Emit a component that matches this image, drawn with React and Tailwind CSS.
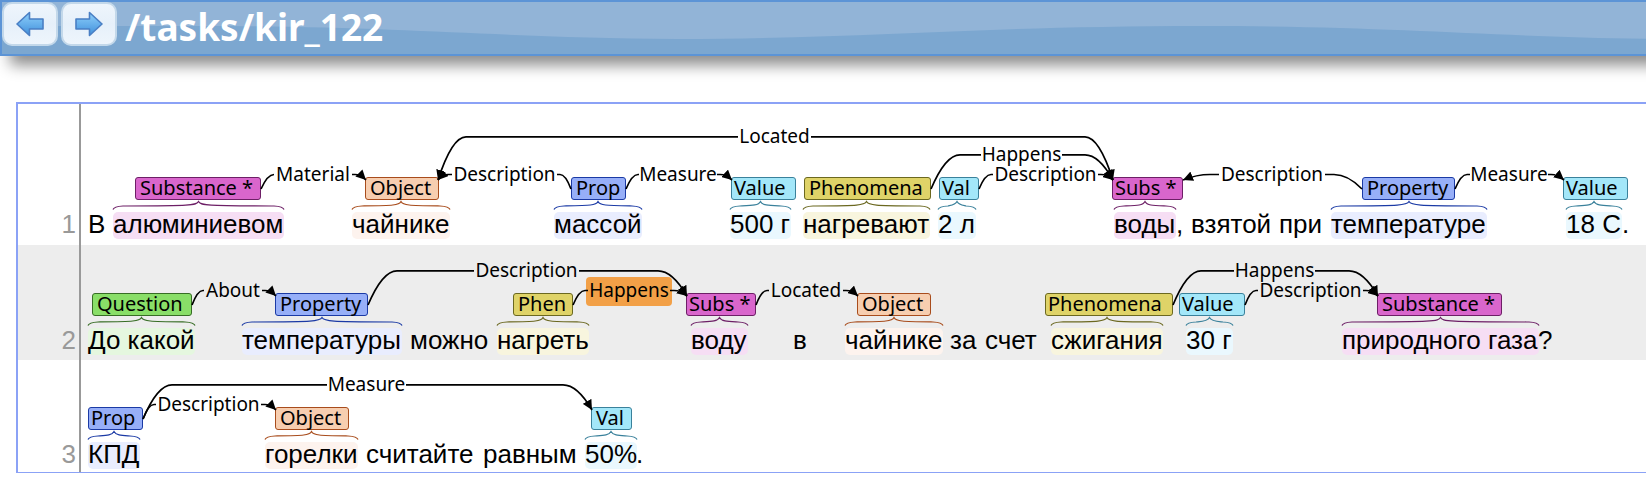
import React from "react";

/* Horizontal positions count from the page edge; the sentence canvas begins here. */
const CANVAS_LEFT = 81;
const ARC_LEVELS = [-2.5, -22.2, -40.2];

const CHIP = {
  purple: "bg-[#d966cc] border-[#6d1f66]",
  orange: "bg-[#f7ceb0] border-[#a84c1c]",
  blue: "bg-[#97aff8] border-[#1b3aa5]",
  cyan: "bg-[#a3e7f9] border-[#3a819b]",
  olive: "bg-[#dfd368] border-[#6b6820]",
  green: "bg-[#89de68] border-[#376d25]",
};
const GLOW = {
  purple: "bg-[#f6def4]",
  orange: "bg-[#fdf3ee]",
  blue: "bg-[#e9edfe]",
  cyan: "bg-[#eaf8fe]",
  olive: "bg-[#f8f5de]",
  green: "bg-[#e5f7df]",
};
const BRACE = {
  purple: "stroke-[#6d1f66]",
  orange: "stroke-[#a84c1c]",
  blue: "stroke-[#1b3aa5]",
  cyan: "stroke-[#3a819b]",
  olive: "stroke-[#6b6820]",
  green: "stroke-[#376d25]",
};

const SENTENCES = [
  {
    height: "h-[141px]",
    chipTop: 73,
    plain: [
      [88, "В"],
      [1176, ","],
      [1191, "взятой"],
      [1279, "при"],
      [1622, "."],
    ],
    spans: [
      { text: "алюминиевом", x: 113, end: 284, label: "Substance *", chip: [135, 261], color: "purple" },
      { text: "чайнике", x: 352, end: 450, label: "Object", chip: [365, 439], color: "orange" },
      { text: "массой", x: 554, end: 642, label: "Prop", chip: [571, 626], color: "blue" },
      { text: "500 г", x: 730, end: 791, label: "Value", chip: [731, 796], color: "cyan", tight: true },
      { text: "нагревают", x: 803, end: 930, label: "Phenomena", chip: [804, 931], color: "olive" },
      { text: "2 л", x: 938, end: 976, label: "Val", chip: [939, 979], color: "cyan", tight: true },
      { text: "воды", x: 1114, end: 1176, label: "Subs *", chip: [1112, 1183], color: "purple", tight: true },
      { text: "температуре", x: 1331, end: 1487, label: "Property", chip: [1362, 1455], color: "blue" },
      { text: "18 С", x: 1566, end: 1622, label: "Value", chip: [1563, 1628], color: "cyan", tight: true },
    ],
    arcs: [
      { label: "Material", level: 0, from: 261, fromFlat: 274, text: [276, 350], toFlat: 355, to: 366 },
      { label: "Description", level: 0, from: 571, fromFlat: 560, text: [454, 555], toFlat: 448, to: 438 },
      { label: "Measure", level: 0, from: 626, fromFlat: 638, text: [641, 715], toFlat: 720, to: 732 },
      { label: "Located", level: 2, from: 1113, fromFlat: 1085, text: [740, 809], toFlat: 466, to: 438, both: true },
      { label: "Happens", level: 1, from: 931, fromFlat: 960, text: [983, 1060], toFlat: 1085, to: 1113 },
      { label: "Description", level: 0, from: 979, fromFlat: 991, text: [995, 1096], toFlat: 1101, to: 1113 },
      { label: "Description", level: 0, from: 1362, fromFlat: 1334, text: [1221, 1323], toFlat: 1210, to: 1183 },
      { label: "Measure", level: 0, from: 1455, fromFlat: 1467, text: [1472, 1546], toFlat: 1551, to: 1564 },
    ],
  },
  {
    height: "h-[115px]",
    chipTop: 48,
    shaded: true,
    plain: [
      [410, "можно"],
      [793, "в"],
      [950, "за"],
      [985, "счет"],
      [1538, "?"],
    ],
    spans: [
      { text: "До какой", x: 88, end: 195, label: "Question", chip: [92, 192], color: "green" },
      { text: "температуры", x: 242, end: 402, label: "Property", chip: [275, 368], color: "blue" },
      { text: "нагреть", x: 497, end: 589, label: "Phen", chip: [513, 573], color: "olive" },
      { text: "воду", x: 691, end: 748, label: "Subs *", chip: [686, 756], color: "purple", tight: true },
      { text: "чайнике", x: 845, end: 943, label: "Object", chip: [857, 931], color: "orange" },
      { text: "сжигания", x: 1051, end: 1163, label: "Phenomena", chip: [1045, 1173], color: "olive", tight: true },
      { text: "30 г", x: 1186, end: 1233, label: "Value", chip: [1179, 1245], color: "cyan", tight: true },
      { text: "природного газа", x: 1342, end: 1539, label: "Substance *", chip: [1377, 1502], color: "purple" },
    ],
    arcs: [
      { label: "About", level: 0, from: 192, fromFlat: 203, text: [206, 260], toFlat: 265, to: 276 },
      { label: "Description", level: 1, from: 368, fromFlat: 397, text: [476, 577], toFlat: 658, to: 687 },
      { label: "Happens", level: 0, from: 573, fromFlat: 585, text: [590, 668], toFlat: 674, to: 687, active: true },
      { label: "Located", level: 0, from: 756, fromFlat: 767, text: [771, 841], toFlat: 846, to: 858 },
      { label: "Happens", level: 1, from: 1173, fromFlat: 1201, text: [1236, 1313], toFlat: 1349, to: 1378 },
      { label: "Description", level: 0, from: 1245, fromFlat: 1256, text: [1260, 1361], toFlat: 1366, to: 1378 },
    ],
  },
  {
    height: "h-[112px]",
    chipTop: 47,
    plain: [
      [366, "считайте"],
      [483, "равным"],
      [636, "."],
    ],
    spans: [
      { text: "КПД", x: 88, end: 140, label: "Prop", chip: [88, 143], color: "blue", tight: true },
      { text: "горелки", x: 265, end: 358, label: "Object", chip: [275, 349], color: "orange" },
      { text: "50%", x: 585, end: 637, label: "Val", chip: [591, 632], color: "cyan" },
    ],
    arcs: [
      { label: "Description", level: 0, from: 143, fromFlat: 154, text: [158, 259], toFlat: 265, to: 276 },
      { label: "Measure", level: 1, from: 143, fromFlat: 172, text: [329, 404], toFlat: 563, to: 592 },
    ],
  },
];

function bracePath(x0, x1, top) {
  const mid = (x0 + x1) / 2;
  return `M${x0} ${top + 8} Q${x0 + 1} ${top + 5} ${x0 + 10} ${top + 4.5} C${mid - 8} ${top + 4} ${mid - 2} ${top + 4} ${mid} ${top} C${mid + 2} ${top + 4} ${mid + 8} ${top + 4} ${x1 - 10} ${top + 4.5} Q${x1 - 1} ${top + 5} ${x1} ${top + 8}`;
}

function Arc({ arc, chipTop }) {
  const y = chipTop + ARC_LEVELS[arc.level];
  const dir = arc.to > arc.from ? 1 : -1;
  const [t0, t1] = arc.text;
  const start = dir > 0 ? t0 - 2 : t1 + 2;
  const end = dir > 0 ? t1 + 2 : t0 - 2;
  const bendFrom = (arc.from + arc.fromFlat) / 2;
  const bendTo = (arc.to + arc.toFlat) / 2;
  return (
    <g className="fill-none stroke-black" strokeWidth="1.7">
      {arc.both ? (
        <path
          d={`M${start} ${y} H${arc.fromFlat} Q${bendFrom} ${y} ${arc.from} ${chipTop + 3}`}
          markerEnd="url(#arrow)"
        />
      ) : (
        <path d={`M${start} ${y} H${arc.fromFlat} Q${bendFrom} ${y} ${arc.from} ${chipTop + 12}`} />
      )}
      <path d={`M${end} ${y} H${arc.toFlat} Q${bendTo} ${y} ${arc.to} ${chipTop + 3}`} markerEnd="url(#arrow)" />
    </g>
  );
}

function Sentence({ number, sentence }) {
  const { chipTop, spans, plain, arcs } = sentence;
  const left = (x) => x - CANVAS_LEFT;
  return (
    <li className={`flex ${sentence.height} ${sentence.shaded ? "bg-[#ededed]" : "bg-white"}`}>
      <div
        className="w-[63px] shrink-0 border-r-2 border-[#999999] pr-[3px] text-right text-[26px] leading-[25px] text-[#999999]"
        style={{ paddingTop: chipTop + 35 }}
      >
        {number}
      </div>
      <div className="relative flex-1">
        {spans.map((s) => (
          <React.Fragment key={s.x}>
            <mark
              className={`absolute h-[27px] rounded-[5px] text-[26px] leading-[25px] whitespace-nowrap text-black ${GLOW[s.color]}`}
              style={{ left: left(s.x), top: chipTop + 35, width: s.end - s.x }}
            >
              {s.text}
            </mark>
            <div
              className={`absolute h-[23px] rounded-[3px] border font-['Noto_Sans',sans-serif] text-[20px] leading-[19px] whitespace-nowrap ${s.tight ? "pl-[2px]" : "pl-1"} ${CHIP[s.color]}`}
              style={{ left: left(s.chip[0]), top: chipTop, width: s.chip[1] - s.chip[0] }}
            >
              {s.label}
            </div>
          </React.Fragment>
        ))}
        {plain.map(([x, text]) => (
          <span
            key={x}
            className="absolute text-[26px] leading-[25px] whitespace-nowrap"
            style={{ left: left(x), top: chipTop + 35 }}
          >
            {text}
          </span>
        ))}
        {arcs.map((a) => (
          <span
            key={a.text[0]}
            className={`absolute flex justify-center font-['Noto_Sans',sans-serif] text-[19px] leading-[19px] whitespace-nowrap ${a.active ? "-mt-1 h-[29px] rounded-[4px] bg-[#f2a047] pt-1" : "h-[19px]"}`}
            style={{
              left: left(a.text[0] - 4),
              top: Math.round(chipTop + ARC_LEVELS[a.level] - 10),
              width: a.text[1] - a.text[0] + 8,
            }}
          >
            {a.label}
          </span>
        ))}
        <svg className="absolute inset-0 size-full overflow-visible" aria-hidden="true">
          <g transform={`translate(${-CANVAS_LEFT} 0)`}>
            {spans.map((s) => (
              <path
                key={s.x}
                d={bracePath(s.x, s.end, chipTop + 24.5)}
                className={`fill-none ${BRACE[s.color]}`}
                strokeWidth="1.2"
              />
            ))}
            {arcs.map((a) => (
              <Arc key={a.text[0]} arc={a} chipTop={chipTop} />
            ))}
          </g>
        </svg>
      </div>
    </li>
  );
}

function NavButton({ label, flip }) {
  return (
    <button
      type="button"
      aria-label={label}
      className="flex h-[44px] w-[56px] items-center justify-center rounded-[10px] border-2 border-[#c3d8ea] bg-linear-to-b from-[#eef5fc] via-[#e6f0fa] to-[#eef5fc]"
    >
      <svg viewBox="0 0 28 26" className={`h-[26px] w-[28px] ${flip ? "-scale-x-100" : ""}`}>
        <path
          d="M1 13 13.500 1.500V8H27v10H13.500v6.500Z"
          fill="url(#nav-fill)"
          stroke="#4a7fc4"
          strokeWidth="1.6"
          strokeLinejoin="round"
        />
      </svg>
    </button>
  );
}

export default function App() {
  return (
    <div className="overflow-x-hidden bg-white font-['Liberation_Sans',Arial,sans-serif] text-black">
      <svg className="absolute size-0" aria-hidden="true">
        <defs>
          <marker id="arrow" viewBox="0 0 10 10" refX="10" refY="5" markerWidth="10" markerHeight="10" markerUnits="userSpaceOnUse" orient="auto">
            <path d="M0 0 10 5 0 10Z" />
          </marker>
          <linearGradient id="nav-fill" x1="0" y1="0" x2="0" y2="1">
            <stop offset="0" stopColor="#8fd0fb" />
            <stop offset="1" stopColor="#3f8fdb" />
          </linearGradient>
        </defs>
      </svg>
      <header className="relative -mr-8 flex h-[56px] items-start gap-1 border-2 border-[#5c94d6] bg-[#7ca7d0] shadow-[10px_9px_14px_#8c8c8c]">
        <svg className="absolute inset-0 size-full" viewBox="0 0 1676 52" preserveAspectRatio="none" aria-hidden="true">
          <path
            d="M0 0H1676V37C1500 36 1400 24 1200 24C980 24 860 37 676 37C500 36 400 24 200 24H0Z"
            fill="#92b4d7"
          />
        </svg>
        <nav className="relative flex gap-[3px]">
          <NavButton label="Previous document" />
          <NavButton label="Next document" flip />
        </nav>
        <h1 className="relative pl-1 font-['Noto_Sans',sans-serif] text-[37px] leading-[50px] font-bold text-white">
          /tasks/kir_122
        </h1>
      </header>
      <main className="mt-[46px] ml-4">
        <ol className="border-2 border-r-0 border-b border-[#8ba2f6]">
          {SENTENCES.map((s, i) => (
            <Sentence key={i} number={i + 1} sentence={s} />
          ))}
        </ol>
      </main>
    </div>
  );
}
